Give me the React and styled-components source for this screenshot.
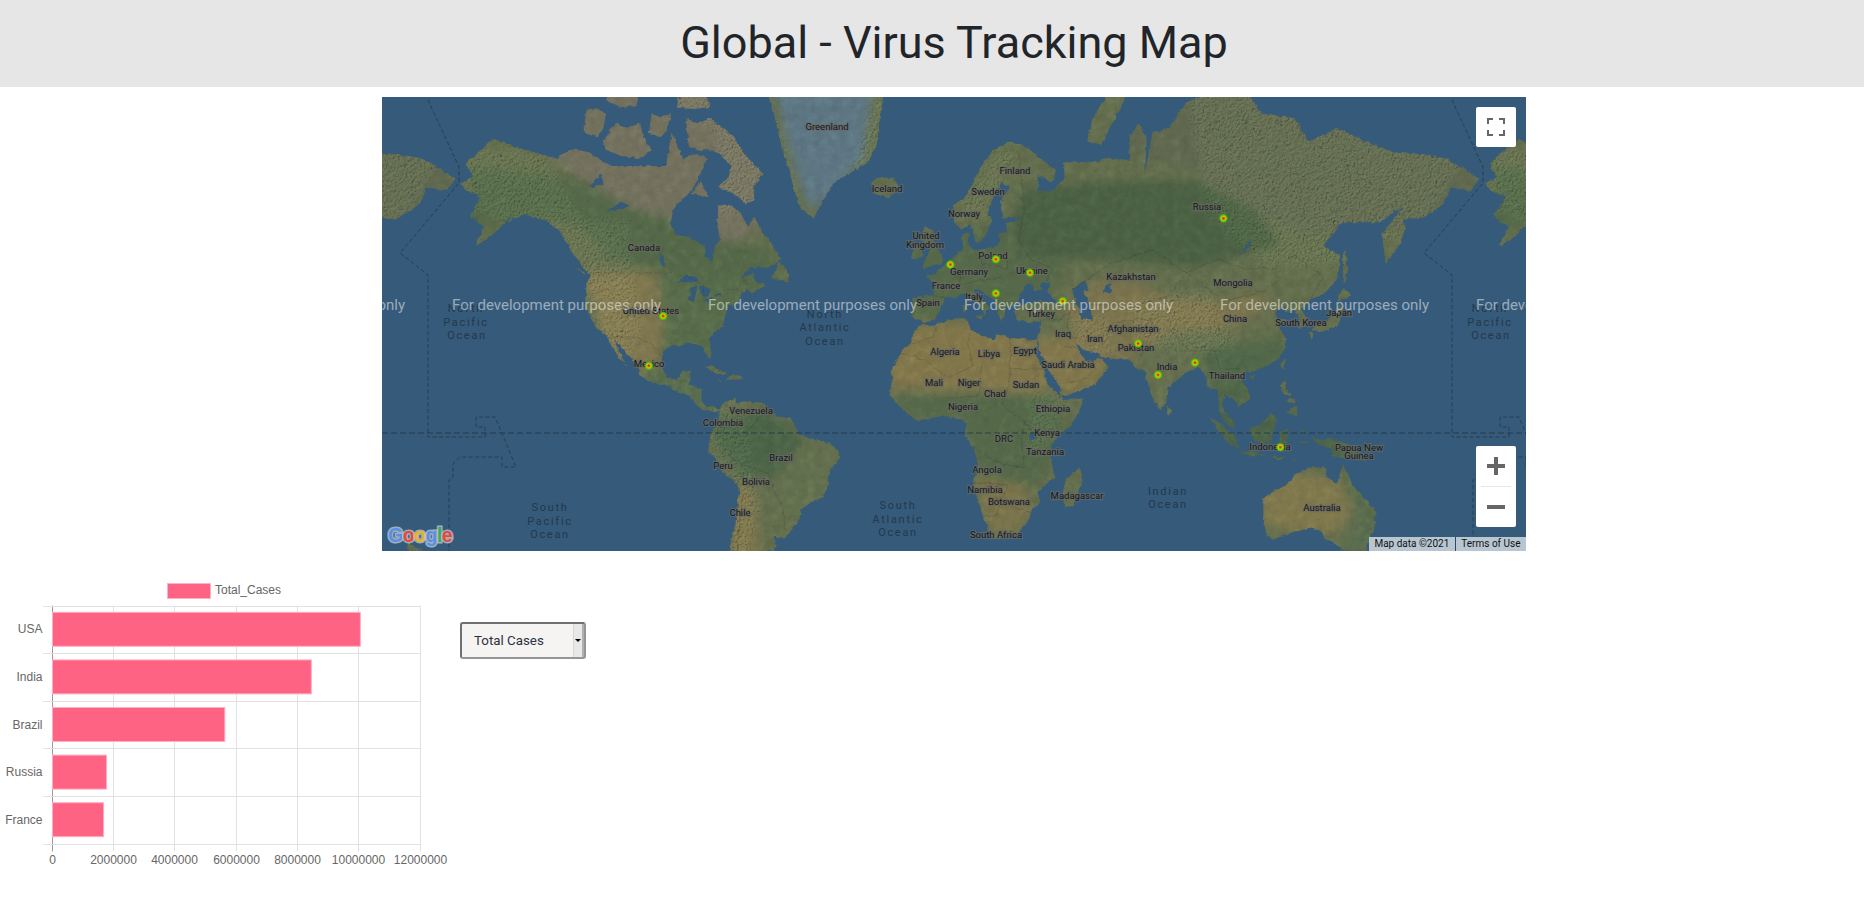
import React from 'react';
import styled, { createGlobalStyle } from 'styled-components';

const GlobalStyle = createGlobalStyle`
  html, body {
    margin: 0;
    padding: 0;
    background: #fff;
    font-family: Roboto, "Liberation Sans", sans-serif;
  }
`;

// web mercator at google zoom 2, in pixels inside the 1144x454 map frame
const WORLD = 1024;
const lonX = (lon) => 557 + (lon * WORLD) / 360;
const latY = (lat) => 336 - (WORLD / (2 * Math.PI)) * Math.log(Math.tan(Math.PI / 4 + (lat * Math.PI) / 360));
const toPath = (pts, close = true) =>
  pts.map(([lon, lat], i) => `${i ? 'L' : 'M'}${lonX(lon).toFixed(1)} ${latY(lat).toFixed(1)}`).join('') + (close ? 'Z' : '');

const LAND = [
  // north america
  [[-168,65.6],[-164,66.5],[-166.5,68.3],[-163,69.5],[-156.5,71.3],[-150,70.5],[-141,69.6],[-135,69],[-128,70.2],[-124,69.8],[-115,68],[-108,68],[-102,68],[-96,68],[-94,72],[-90,69],[-85,69.5],[-81.5,69],[-85,66],[-87,64.5],[-93,62],[-94.5,59],[-92.5,57],[-88,56.5],[-82.5,55],[-82,52.5],[-79.5,51.3],[-79,54.5],[-77,56],[-78,59],[-77.5,62.4],[-73,62.2],[-70,61],[-67,58.5],[-65,60.3],[-62,57.5],[-58,54.5],[-55.7,52],[-60,50.2],[-66.5,50.2],[-70,47.5],[-65,49],[-64.5,47],[-61,46],[-66,44],[-67,45],[-70,43.5],[-70,41.7],[-74,40.5],[-75.5,37.5],[-76,35],[-78,34],[-81,31.5],[-80,27],[-80.5,25.2],[-82,27],[-83,29],[-85,29.7],[-89,30.2],[-90,29.2],[-94,29.5],[-97.3,27.5],[-97.5,22.5],[-95.5,18.7],[-92,18.6],[-90.5,21],[-87,21.4],[-88,17],[-83.5,15.2],[-83.5,11],[-81.5,9],[-79.5,9.5],[-77.3,8.6],[-78,7.3],[-80,7.5],[-83,8.3],[-85.5,10],[-87.5,13],[-91.5,14],[-94.5,16.2],[-100,17],[-105.5,20],[-105.5,22.5],[-109,26],[-112.5,29.5],[-114.7,31.5],[-112,27],[-110,23],[-109.5,23],[-112,25],[-115,29],[-117,32.5],[-120.5,34.5],[-122.5,37.5],[-124.3,40.3],[-124,46],[-122.5,48.3],[-125,50],[-128,52.5],[-130.5,55],[-134,58],[-138,59.5],[-146,60.7],[-151.5,59.3],[-150,61],[-153,59],[-158,56.5],[-163,54.8],[-160,58.5],[-165,60.5],[-161,63.5],[-166,64.5]],
  // arctic islands
  [[-80,73.5],[-76,72.5],[-72,71.5],[-70,70.3],[-67,69],[-62,67],[-65,65],[-65,63],[-68,62.5],[-70,63.3],[-74,64.5],[-78,65],[-74,66.5],[-73,68],[-77,69.5],[-80,70],[-85,70],[-88,70.5],[-89,73.5],[-85,73]],
  [[-117,70],[-112,69.3],[-105,69],[-101,70],[-104,71.5],[-105,73],[-110,72.5],[-114,73],[-118,71]],
  [[-125,72],[-120,71.5],[-118,72.5],[-117,74],[-121,74.5],[-124,74.3]],
  [[-90,76.5],[-84,76.2],[-78,76.5],[-75,78.5],[-64,81.5],[-62,82.5],[-75,83],[-90,82],[-85,79]],
  [[-92,74.5],[-86,74.4],[-80,74.6],[-82,75.5],[-80,75.9],[-87,75.5],[-92,76.5]],
  [[-117,75.2],[-112,74.6],[-106,74.7],[-106,76],[-110,75.6],[-116,76.5]],
  [[-102,72],[-98,71.5],[-96,72],[-94,74],[-98,73.6],[-101,74]],
  [[-87,64],[-81,63.5],[-84,66]],
  [[-59,47.7],[-53,46.7],[-53,49],[-56,51.5]],
  [[-128,50.5],[-123.5,48.4],[-125,48.8]],
  [[-85,22],[-80,23],[-74.2,20.2],[-78,19.9],[-82,22.5]],
  [[-74.5,18.5],[-68.5,18.5],[-70,19.8],[-73,20]],
  [[-78.3,18.3],[-76.3,18],[-77,18.5]],
  // greenland
  [[-73,78.2],[-60,76],[-55,70],[-51,65],[-49,62],[-44,60],[-42,62],[-37,65.7],[-25,68.5],[-22,70.5],[-20,75],[-18,78],[-12,81.5],[-30,83.5],[-50,82.5],[-62,81.5]],
  // south america
  [[-77.3,8.6],[-75,11],[-72,12],[-71.5,10.5],[-68,11],[-62,10.6],[-60,8.5],[-57,6],[-52,5],[-50,1],[-48,-1],[-44,-2.5],[-40,-3],[-35.5,-5.5],[-35,-9],[-38.5,-13],[-39,-18],[-41,-22],[-45,-23.7],[-48.5,-26],[-49,-29],[-52,-32.5],[-54,-34.5],[-57,-34.5],[-58.5,-34],[-57,-36.5],[-58,-38.3],[-62,-39],[-62,-42],[-73.5,-42],[-73.5,-37],[-71.5,-30],[-70.3,-20],[-71,-17.5],[-76,-14],[-78,-10],[-81,-6],[-81,-4],[-80,-2.5],[-81,-1],[-79.5,1],[-77.5,4],[-77.5,7.3]],
  // africa
  [[-6,35.8],[-2,35.2],[3,36.8],[10,37.3],[11,34],[15,32.3],[20,31],[20,32.8],[25,31.7],[32,31.2],[33,31],[34.4,31.3],[34.5,29],[33,28.5],[32.5,30],[33.5,27.5],[34,26.5],[37,21.5],[37.5,18.5],[39.5,15.5],[43.2,12.5],[43.3,11.5],[51,12],[49,7],[46,2.5],[41,-2],[39,-6],[39.5,-10],[40.7,-15],[35,-20],[35.3,-24],[32.8,-26],[31,-30],[27,-33.8],[20,-34.8],[18.3,-34],[15,-27],[12,-18],[13.7,-11],[12,-5],[9,-1],[9.8,3.5],[8.5,4.5],[5,5.5],[1,6],[-4,5],[-8,4.5],[-13,8.5],[-16.7,12.5],[-17.5,14.7],[-16,19],[-17,21],[-13,27.7],[-10,30],[-9,33]],
  [[49.5,-12],[50.5,-16],[47,-25],[44,-25],[43.5,-21],[44.5,-16]],
  // eurasia
  [[-9,37],[-9.5,38.7],[-9,43],[-2,43.5],[-1.2,46],[-4.7,48.3],[-1.5,48.7],[1.5,50.5],[4,52],[7,53.5],[8.5,54],[8.2,57],[10.5,57.6],[10,55],[12,54],[14,54],[19,54.5],[21,55.3],[21.5,57.5],[24,57.2],[23.5,59.2],[30,60],[25,60.2],[22.5,60],[21.5,62.8],[25,65],[22,65.8],[17.5,62],[17.5,60.5],[19,59.8],[16.5,57],[14.3,55.5],[13,55.4],[11,59],[8,58],[5.5,59],[5,62],[10,64],[14,67.5],[19,70],[25,71],[31,70.3],[41,67.3],[40,65.8],[35,66.8],[34.8,64.5],[40,64.6],[44,66.3],[44,68.5],[54,68.5],[60,69],[67,68.8],[67,71.5],[70,73],[73,71.5],[72.5,67],[75,72],[81,72.5],[87,75],[100,76.5],[105,77.5],[113,74],[125,73.5],[130,71],[140,72.5],[150,71],[160,69.7],[170,69.5],[178,69],[185,67.5],[190,66.2],[187,64.5],[180,65],[177.5,62.5],[170,60],[163,60],[164,58.5],[162,55],[157,51],[155.7,57],[163,62],[155,59.3],[142,59.3],[135,54.7],[141,53],[140.5,48],[135,43.5],[130.5,42.5],[127.5,39.7],[129.4,37],[129,35.2],[126.3,34.5],[126.7,37.5],[125,39.7],[121.5,39],[122,40.7],[118,39],[119,37.3],[122.5,37],[119.5,35],[121.8,31.5],[122,29],[119.5,25.5],[114,22.3],[110,21],[108,21.5],[106,19],[109,14],[109,11.5],[105,8.7],[105,10.3],[102.5,12.2],[100.5,13.5],[99.5,10],[100.5,7],[103.5,4.5],[104,1.3],[101,3],[98.5,8],[98,15],[94.5,16],[94,19],[91.5,22.5],[89,21.8],[86.8,20.8],[80.3,15.5],[80,11],[77.5,8],[75,12.5],[72.8,19],[72.5,21],[69,22.3],[67,25],[61.5,25.2],[57,25.8],[56.5,27],[51,28],[48,30],[50,26.5],[51.5,24.5],[54.5,24.2],[56.3,26],[59.7,22.5],[55,17],[45,13],[43,13],[42.5,16],[39,21],[35,28],[34.5,31.5],[35.8,35],[36,36.8],[32,36],[30,36.3],[27.3,37],[26.5,39.5],[29,41],[35,42],[41.5,41.5],[38,44.4],[39,47],[35,46],[36.5,45.2],[33.5,44.5],[33,46],[30.8,46.4],[28.7,44],[28,41.7],[26,40.8],[23.5,40.3],[23,38],[22,36.5],[20,39.8],[19.3,42],[14,45.2],[12.3,45.2],[12.5,44],[16,41.7],[18.5,40],[16.5,39.5],[16,38],[14,41],[10.5,43],[8.8,44.4],[6,43],[3,43],[0.5,40.5],[-0.3,38.7],[-2,36.8],[-5.5,36],[-6.5,37]],
  // islands of the old world
  [[-5.5,50],[1.3,51.2],[1.5,52.8],[-1.5,55],[-2,57.7],[-5,58.6],[-6,56],[-3,54],[-5,52]],
  [[-10,52],[-6,52.2],[-6,55],[-8.5,55]],
  [[-24,65.5],[-22,64],[-18,63.4],[-14,65],[-16,66.4],[-22,66.4]],
  [[52,71],[57,70.7],[68,76.5],[60,76],[54,73.5]],
  [[12.5,38],[15.5,38.2],[15,36.8]],
  [[8.3,41],[9.7,41],[9.5,39.2],[8.5,39]],
  [[130.9,34],[135,33.6],[140,35],[142,39.5],[141,41.4],[139.8,39],[136.8,37],[132,35]],
  [[130,33.5],[131.8,33],[131,31]],
  [[140,42],[145,43.3],[142,45.4]],
  [[142,46],[143.5,49],[143,54],[142,53]],
  [[120,23],[121,22],[122,25],[121,25.2]],
  [[108.7,19.3],[110.5,18.3],[111,20],[109.5,20]],
  [[120,16.5],[122,18.5],[122,15],[124,13],[121,13.7]],
  [[122,7],[126,6],[126,9.5],[123.5,8.5]],
  [[122,11],[125,10.5],[125,12.3],[123,12]],
  [[80,9.7],[82,7.5],[80.5,6]],
  [[95.3,5.5],[98,4],[104,-1],[106,-5.8],[102,-4],[98,1]],
  [[105.2,-6.5],[111,-6.5],[114.5,-8],[108,-7.8]],
  [[115,-8.3],[120,-8.3],[123,-8.5],[119,-9.2]],
  [[123.5,-10],[127,-8.5],[125,-9.7]],
  [[109,1.5],[113,3],[117,7],[119,5],[117.7,1],[116,-4],[111,-3],[109.5,0]],
  [[119.5,-5.5],[120,0.5],[125,1.5],[121,0.2],[123,-1],[122,-5],[120.5,-3]],
  [[127.5,2],[128.5,1],[128,-1],[127.5,0]],
  [[126,-3],[130.5,-3],[128,-3.8]],
  [[131,-1],[135,-3],[138,-1.7],[145,-4.5],[148,-8],[150.5,-10.5],[145,-8],[143,-9],[138,-8],[138,-5.5],[133,-4]],
  [[148.5,-5.5],[152,-4.2],[151,-6.2]],
  [[114,-22],[122,-18],[126,-14],[130,-12],[136,-12],[136,-15],[140,-17.5],[142,-11],[146,-19],[150,-22.5],[153.5,-27],[153,-32],[150.5,-36],[150,-38.5],[146,-39],[143,-38.7],[138,-35.5],[136,-35],[134,-32.5],[131,-31.5],[124,-33],[118,-35],[115,-34.2],[114,-27]],
  [[172.7,-34.5],[175,-37],[178.5,-38],[177,-39.5],[174,-39.5]],
];

const WATER = [
  [[47,45],[51,47],[53,45],[51,44.5],[53,41],[54,37],[50,37.3],[49,40],[47.5,43]],
  [[58,44],[61,44.5],[60,46.5],[58.5,46]],
  [[-92,46.8],[-85,46.7],[-85,48],[-89,48.5]],
  [[-88,42],[-86,42],[-85,46],[-87,45.5]],
  [[-84,46],[-80,45],[-82,43],[-84,44]],
  [[-83,41.6],[-79,42.7],[-81,42.8]],
  [[-79.5,43.3],[-76,43.5],[-77,44]],
  [[-123,65],[-118,65.5],[-119,67]],
  [[-117,61],[-109,62],[-112,62.8]],
  [[-98,50.5],[-96,50.5],[-98,54]],
  [[104,51.5],[110,55.5],[109,55.8],[105,52]],
  [[32,-2.5],[34,-2],[34,0.3],[32,0]],
];

const REGIONS = [
  ['#77735f', [[-130,78],[-60,78],[-60,60],[-70,56],[-78,56],[-85,58],[-95,60],[-110,62],[-125,66],[-140,70]]],
  ['#566b48', [[-165,68],[-125,66],[-110,62],[-95,60],[-85,57],[-75,55],[-60,55],[-55,46],[-75,44],[-90,47],[-100,50],[-115,52],[-125,58],[-135,60],[-165,58]]],
  ['#85794f', [[-125,49],[-100,49],[-97,35],[-98,27],[-100,20],[-108,22],[-118,32]]],
  ['#5a6e4c', [[-97,49],[-65,47],[-75,35],[-80,25],[-97,28]]],
  ['#5c7050', [[-105,22],[-95,22],[-85,22],[-78,8],[-85,8],[-100,15]]],
  ['#607989', [[-60,78],[-22,78],[-27,69],[-42,62],[-46,62],[-51,68]]],
  ['#88794b', [[-18,30],[-5,36],[10,36],[32,32],[40,20],[36,14],[15,15],[-5,15],[-17,16]]],
  ['#88794b', [[34,32],[48,32],[60,25],[55,16],[44,13],[37,22]]],
  ['#7f754d', [[44,40],[55,47],[70,47],[80,43],[100,42],[110,44],[118,42],[105,35],[80,33],[70,25],[57,25],[48,30]]],
  ['#566b4a', [[-16,13],[40,13],[45,2],[40,-10],[35,-18],[15,-15],[10,-2],[8,5],[-10,6]]],
  ['#80764c', [[12,-15],[30,-18],[33,-27],[27,-33],[18,-33]]],
  ['#4e6547', [[-80,5],[-60,8],[-50,0],[-45,-5],[-55,-15],[-70,-15],[-78,-5]]],
  ['#667250', [[-50,-5],[-35,-5],[-40,-22],[-50,-30],[-60,-25],[-55,-12]]],
  ['#7f744c', [[-72,-17],[-65,-20],[-62,-42],[-74,-42]]],
  ['#586b49', [[-10,55],[30,60],[45,52],[40,44],[20,38],[-10,37]]],
  ['#4d6242', [[30,65],[60,66],[90,66],[110,62],[120,55],[90,50],[60,52],[30,52],[25,60]]],
  ['#646a50', [[85,78],[190,72],[190,60],[140,55],[115,60],[85,68],[60,70]]],
  ['#687150', [[68,30],[88,27],[88,20],[78,8],[72,20]]],
  ['#53694a', [[92,28],[122,32],[120,22],[108,10],[100,5],[95,15]]],
  ['#4f6648', [[95,7],[130,8],[152,-3],[150,-12],[115,-10],[100,-8]]],
  ['#867a4e', [[113,-20],[125,-14],[140,-16],[145,-25],[140,-33],[125,-33],[114,-30]]],
  ['#5a6e4e', [[142,-11],[155,-28],[150,-39],[142,-38],[148,-28]]],
];

const RELIEF = [
  [[-170,70],[-140,70],[-125,60],[-128,50],[-150,58],[-165,62]],
  [[-130,60],[-110,60],[-105,35],[-110,22],[-118,30],[-125,45]],
  [[-125,78],[-60,78],[-62,62],[-78,60],[-78,72]],
  [[-72,78],[-55,72],[-48,60],[-52,60],[-62,76]],
  [[-42,60],[-20,70],[-15,78],[-22,76],[-30,68]],
  [[-80,10],[-68,10],[-63,-25],[-68,-42],[-75,-42],[-72,-18],[-82,-3]],
  [[65,42],[95,45],[105,30],[95,26],[70,30]],
  [[85,78],[190,72],[170,58],[135,50],[115,50],[95,60]],
  [[5,60],[20,70],[28,70],[15,60]],
  [[45,38],[60,38],[62,26],[50,28]],
  [[33,15],[45,12],[38,-5],[30,-10]],
];

const BORDERS = [
  [[-141,69.6],[-141,60.3],[-135,59]],
  [[-123,49],[-95,49],[-89,48],[-83,46],[-82.5,42.5],[-79,43],[-75,45],[-71,45],[-68,47.3],[-67,45]],
  [[-117,32.5],[-108,31.5],[-106,31.7],[-101,29.7],[-97.3,26]],
  [[-92,14.5],[-91,17.8],[-89,17.9]],
  [[-60,8.5],[-67,1],[-70,-4],[-74,-8],[-69,-11],[-60,-14],[-58,-20],[-55,-25],[-54,-33]],
  [[-71,-17.5],[-69,-22],[-70,-30],[-71,-40]],
  [[-9,30],[-2,32],[-1,35]],
  [[-13,27],[-5,25],[3,19],[12,23],[10,30],[11,33]],
  [[25,31.7],[25,20],[24,15],[22,10],[30,4],[34,-1]],
  [[25,22],[37,22]],
  [[3,12],[14,13],[15,23]],
  [[12,-5],[22,-11],[30,-12],[29,-2],[30,4]],
  [[12,-17],[24,-18],[20,-28],[16,-28]],
  [[33,-27],[25,-25],[20,-22]],
  [[28,70],[30,62],[28,56],[32,52],[40,50],[38,47]],
  [[47,45],[60,51],[75,54],[87,49],[80,43],[70,41],[55,41],[53,41]],
  [[87,49],[98,52],[107,50],[118,50],[125,53],[135,48],[131,43]],
  [[87,49],[100,42],[112,44],[119,47]],
  [[80,35],[88,28],[97,28],[99,22],[106,22]],
  [[61,36],[70,37],[75,37],[74,32],[70,24]],
  [[46,39],[45,35],[48,30]],
  [[36,37],[42,37],[46,39]],
  [[44,29],[48,29],[55,22],[52,19],[45,17]],
  [[14,54],[15,51],[24,50],[24,54]],
  [[2,51],[8,49],[7,46],[13,47],[22,48]],
  [[-2,43.5],[3,42.5]],
];

const TIMEZONE = [
  [[46,3],[77,70],[77,86],[18,156],[46,178],[46,340],[103,340],[103,330],[94,330],[94,320],[113,320],[134,370],[120,370],[120,360],[78,360],[71,367],[71,380],[67,383],[67,454]],
];

const LABELS = [
  ['Greenland',827,126],['Iceland',887,188],['Canada',644,247],['United States',651,310],['United',926,235],['Kingdom',925,244],['Spain',928,302],
  ['Finland',1015,170],['Sweden',988,191],['Norway',964,213],['Russia',1207,206],['Poland',993,255],['Germany',969,271],['France',946,285],['Ukraine',1032,270],['Italy',974,296],
  ['Kazakhstan',1131,276],['Mongolia',1233,282],['Turkey',1041,313],['China',1235,318],['South Korea',1301,322],['Japan',1339,312],['Afghanistan',1133,328],
  ['Mexico',649,363],['Venezuela',751,410],['Colombia',723,422],['Brazil',781,457],['Peru',723,465],['Bolivia',756,481],['Chile',740,512],
  ['Algeria',945,351],['Mali',934,382],['Libya',989,353],['Egypt',1025,350],['Niger',969,382],['Chad',995,393],['Nigeria',963,406],
  ['Iraq',1063,333],['Iran',1095,338],['Pakistan',1136,347],['India',1167,366],['Saudi Arabia',1068,364],['Thailand',1227,375],['Sudan',1026,384],['Ethiopia',1053,408],['Kenya',1047,432],['DRC',1004,438],['Tanzania',1045,451],['Indonesia',1270,446],['Papua New',1359,447],['Guinea',1359,455],['Angola',987,469],['Namibia',985,489],['Botswana',1009,501],['Madagascar',1077,495],['South Africa',996,534],['Australia',1322,507],
];

const OCEANS = [
  ['North',466,308],['Pacific',466,322],['Ocean',467,335],
  ['North',825,314],['Atlantic',825,327],['Ocean',825,341],
  ['South',550,507],['Pacific',550,521],['Ocean',550,534],
  ['South',898,505],['Atlantic',898,519],['Ocean',898,532],
  ['Indian',1168,491],['Ocean',1168,504],
  ['North',1490,308],['Pacific',1490,322],['Ocean',1491,335],
];

const HEAT_POINTS = [[38,-97],[23,-102],[50.83,4],[52,20],[44,20],[49,32],[42,43.5],[60,100],[30,70],[20,77],[24,90],[-5,120]];
const WATERMARK_X = [-186,70,326,582,838,1094];

const Page = styled.div`
  min-height: 900px;
  background: #fff;
`;

const Banner = styled.header`
  box-sizing: border-box;
  height: 87px;
  padding: 0 0 2px 44px;
  background: #e6e6e6;
  display: flex;
  align-items: center;
  justify-content: center;
`;

const Title = styled.h1`
  margin: 0;
  font-family: Roboto, sans-serif;
  font-size: 45px;
  font-weight: 400;
  color: #212529;
`;

const MapRow = styled.section`
  display: flex;
  justify-content: center;
  padding: 10px 0 0 44px;
`;

const MapFrame = styled.div`
  position: relative;
  width: 1144px;
  height: 454px;
  overflow: hidden;
  background: #355a7a;
`;

const MapCanvas = styled.svg`
  display: block;
  width: 1144px;
  height: 454px;
`;

const ReliefLayer = styled.g`
  mix-blend-mode: overlay;
`;

const BorderLine = styled.path`
  fill: none;
  stroke: #20262a;
  stroke-width: 0.6;
  stroke-opacity: 0.32;
  stroke-dasharray: ${(p) => (p.$dashed ? '3 2' : 'none')};
`;

const ZoneLine = styled.path`
  fill: none;
  stroke: #1f3040;
  stroke-width: ${(p) => p.$w};
  stroke-opacity: 0.75;
  stroke-dasharray: ${(p) => p.$dash};
`;

const CountryLabel = styled.text`
  font-family: Roboto, sans-serif;
  font-size: 9.5px;
  fill: #15181b;
  stroke: #6a6a66;
  stroke-opacity: 0.65;
  stroke-width: 2.4px;
  paint-order: stroke;
  text-anchor: middle;
  dominant-baseline: central;
`;

const OceanLabel = styled.text`
  font-family: Roboto, sans-serif;
  font-size: 11px;
  letter-spacing: 1.7px;
  fill: #24384c;
  text-anchor: middle;
  dominant-baseline: central;
`;

const Watermark = styled.text`
  font-family: Roboto, sans-serif;
  font-size: 15px;
  fill: #fff;
  fill-opacity: 0.5;
  dominant-baseline: central;
`;

const LogoText = styled.text`
  font-family: "Liberation Sans", sans-serif;
  font-size: 19.5px;
  font-weight: 700;
  letter-spacing: -0.5px;
  stroke: #c3ccd4;
  stroke-opacity: 0.75;
  stroke-width: 3px;
  paint-order: stroke;
`;

const ControlCard = styled.div`
  position: absolute;
  right: 10px;
  width: 40px;
  background: #fff;
  border-radius: 2px;
  display: flex;
  flex-direction: column;
  align-items: center;
  ${(p) => (p.$top ? 'top: 10px;' : 'bottom: 24px;')}
`;

const ControlButton = styled.div`
  width: 40px;
  height: 40px;
  display: flex;
  align-items: center;
  justify-content: center;
`;

const ControlDivider = styled.div`
  width: 30px;
  height: 1px;
  background: #e6e6e6;
`;

const Attribution = styled.div`
  position: absolute;
  right: 0;
  bottom: 0;
  height: 14px;
  display: flex;
  align-items: center;
  background: #b8c6d1;
  font-family: Roboto, sans-serif;
  font-size: 10px;
  color: #111;
`;

const AttributionItem = styled.span`
  padding: 0 5.5px;
  line-height: 14px;
  & + & {
    border-left: 1px solid #2b4a66;
  }
`;

const BottomRow = styled.section`
  display: flex;
  align-items: flex-start;
  margin-top: 19px;
`;

const ChartCanvas = styled.svg`
  display: block;
  flex: none;
  width: 450px;
  height: 300px;
`;

const ChartText = styled.text`
  font-family: "Liberation Sans", Arial, sans-serif;
  font-size: 12px;
  fill: #666;
  text-anchor: ${(p) => p.$anchor || 'middle'};
  dominant-baseline: central;
`;

const GridLine = styled.line`
  stroke: ${(p) => (p.$axis ? '#9a9a9a' : '#e2e2e2')};
  stroke-width: 1;
`;

const Bar = styled.rect`
  fill: #ff6384;
  stroke: #ffb1c1;
  stroke-width: 1;
`;

const SelectBox = styled.div`
  box-sizing: border-box;
  width: 126px;
  height: 37px;
  margin: 52px 0 0 10px;
  display: flex;
  align-items: stretch;
  border: 2px solid;
  border-color: #707070 #959595 #959595 #707070;
  border-radius: 3px;
  background: #f5f4f2;
`;

const SelectValue = styled.div`
  flex: 1;
  display: flex;
  align-items: center;
  padding-left: 12px;
  font-family: Roboto, sans-serif;
  font-size: 13.33px;
  color: #2a3240;
`;

const SelectArrow = styled.div`
  width: 8px;
  display: flex;
  align-items: center;
  justify-content: center;
  background: #e8e8e6;
  border-left: 1px solid #d8d8d8;
  border-right: 2px solid #b0b0b0;
  &::after {
    content: '';
    border-left: 3px solid transparent;
    border-right: 3px solid transparent;
    border-top: 3px solid #000;
  }
`;

const World = () => (
  <g id="world" clipPath="url(#landClip)">
    <rect x="-50" y="0" width="1300" height="454" fill="#67704e" />
    <g filter="url(#soften)">
      {REGIONS.map(([color, pts], i) => (
        <path key={i} d={toPath(pts)} fill={color} />
      ))}
    </g>
    <ReliefLayer>
      <rect x="-50" y="0" width="1300" height="454" filter="url(#mottle)" opacity="0.3" />
      {RELIEF.map((pts, i) => (
        <path key={i} d={toPath(pts)} filter="url(#relief)" opacity="0.8" />
      ))}
    </ReliefLayer>
    <rect x="-50" y="0" width="1300" height="454" fill="#2c3634" opacity="0.14" />
    {WATER.map((pts, i) => (
      <path key={i} d={toPath(pts)} fill="#355a7a" />
    ))}
    {BORDERS.map((pts, i) => (
      <BorderLine key={i} d={toPath(pts, false)} $dashed={i < 2} />
    ))}
  </g>
);

const MapDefs = () => (
  <defs>
    <clipPath id="landClip">
      <path d={LAND.map((pts) => toPath(pts)).join('')} />
    </clipPath>
    <filter id="coast" x="0" y="0" width="100%" height="100%" filterUnits="userSpaceOnUse" primitiveUnits="userSpaceOnUse">
      <feTurbulence type="fractalNoise" baseFrequency="0.2" numOctaves="3" seed="7" result="n" />
      <feDisplacementMap in="SourceGraphic" in2="n" scale="4" xChannelSelector="R" yChannelSelector="G" />
    </filter>
    <filter id="soften" x="-5%" y="-5%" width="110%" height="110%">
      <feGaussianBlur stdDeviation="5" />
    </filter>
    <filter id="mottle" x="0" y="0" width="100%" height="100%">
      <feTurbulence type="fractalNoise" baseFrequency="0.12" numOctaves="3" seed="3" />
      <feColorMatrix type="saturate" values="0" />
    </filter>
    <filter id="relief" x="-5%" y="-5%" width="110%" height="110%">
      <feTurbulence type="fractalNoise" baseFrequency="0.55" numOctaves="2" seed="11" result="n" />
      <feDiffuseLighting in="n" surfaceScale="1.8" lightingColor="#a8a8a8" result="lit">
        <feDistantLight azimuth="225" elevation="50" />
      </feDiffuseLighting>
      <feGaussianBlur in="SourceAlpha" stdDeviation="5" result="edge" />
      <feComposite in="lit" in2="edge" operator="in" />
    </filter>
    <radialGradient id="heat">
      <stop offset="0" stopColor="#f01800" />
      <stop offset="0.22" stopColor="#e04a00" />
      <stop offset="0.42" stopColor="#c8c800" />
      <stop offset="0.65" stopColor="#6cd400" />
      <stop offset="1" stopColor="#58b800" stopOpacity="0.35" />
    </radialGradient>
  </defs>
);

const MapView = () => (
  <MapFrame>
    <MapCanvas viewBox="0 0 1144 454">
      <MapDefs />
      <g filter="url(#coast)">
        <World />
        <use href="#world" x={-WORLD} />
        <use href="#world" x={WORLD} />
      </g>
      <ZoneLine d="M0 336H1144" $w="1.1" $dash="6 3" />
      {[0, WORLD].map((dx) => (
        <g key={dx} transform={`translate(${dx} 0)`}>
          {TIMEZONE.map((pts, i) => (
            <ZoneLine key={i} d={'M' + pts.map((p) => p.join(' ')).join('L')} $w="0.9" $dash="4 2.5" />
          ))}
        </g>
      ))}
      {OCEANS.map(([name, x, y], i) => (
        <OceanLabel key={i} x={x - 382} y={y - 97}>{name}</OceanLabel>
      ))}
      {LABELS.map(([name, x, y]) => (
        <CountryLabel key={name} x={x - 382} y={y - 97}>{name}</CountryLabel>
      ))}
      {HEAT_POINTS.map(([lat, lon]) => (
        <circle key={`${lat}${lon}`} cx={lonX(lon)} cy={latY(lat)} r="4.5" fill="url(#heat)" />
      ))}
      {WATERMARK_X.map((x) => (
        <Watermark key={x} x={x} y="208">For development purposes only</Watermark>
      ))}
      <LogoText x="6" y="445">
        <tspan fill="#5b8fe6">G</tspan>
        <tspan fill="#e8483c">o</tspan>
        <tspan fill="#eab422">o</tspan>
        <tspan fill="#5b8fe6">g</tspan>
        <tspan fill="#3fa85a">l</tspan>
        <tspan fill="#e8483c">e</tspan>
      </LogoText>
    </MapCanvas>
    <ControlCard $top>
      <ControlButton>
        <svg width="18" height="18" viewBox="0 0 18 18" fill="none" stroke="#666" strokeWidth="2">
          <path d="M1 6V1h5M12 1h5v5M17 12v5h-5M6 17H1v-5" />
        </svg>
      </ControlButton>
    </ControlCard>
    <ControlCard>
      <ControlButton>
        <svg width="18" height="18" viewBox="0 0 18 18" fill="#666">
          <path d="M18 7h-7V0H7v7H0v4h7v7h4v-7h7z" />
        </svg>
      </ControlButton>
      <ControlDivider />
      <ControlButton>
        <svg width="18" height="18" viewBox="0 0 18 18" fill="#666">
          <path d="M0 7h18v4H0z" />
        </svg>
      </ControlButton>
    </ControlCard>
    <Attribution>
      <AttributionItem>Map data ©2021</AttributionItem>
      <AttributionItem>Terms of Use</AttributionItem>
    </Attribution>
  </MapFrame>
);

const CASES = [
  ['USA', 10039000],
  ['India', 8440000],
  ['Brazil', 5620000],
  ['Russia', 1760000],
  ['France', 1665000],
];

const PLOT = { left: 52, right: 420, top: 35.5, bottom: 273.5, max: 12000000 };

const CasesChart = () => {
  const plotW = PLOT.right - PLOT.left;
  const rowH = (PLOT.bottom - PLOT.top) / CASES.length;
  const ticks = [0, 2000000, 4000000, 6000000, 8000000, 10000000, 12000000];
  return (
    <ChartCanvas viewBox="0 0 450 300">
      <Bar x="167.5" y="13.5" width="43" height="15" />
      <ChartText $anchor="start" x="215" y="20">Total_Cases</ChartText>
      {ticks.map((t, i) => {
        const x = Math.floor(PLOT.left + (t / PLOT.max) * plotW) + 0.5;
        return (
          <g key={t}>
            <GridLine $axis={i === 0} x1={x} x2={x} y1={PLOT.top} y2={PLOT.bottom + 8} />
            <ChartText x={x} y="290">{t}</ChartText>
          </g>
        );
      })}
      {CASES.map(([name, value], i) => {
        const y = PLOT.top + rowH * i;
        return (
          <g key={name}>
            <Bar x={PLOT.left + 0.5} y={y + (rowH - 34) / 2} width={(value / PLOT.max) * plotW} height="34" />
            <ChartText $anchor="end" x="42.5" y={y + rowH / 2}>{name}</ChartText>
          </g>
        );
      })}
      {[0, 1, 2, 3, 4, 5].map((i) => {
        const y = Math.round(PLOT.top + rowH * i) + 0.5;
        return <GridLine key={i} x1="43" x2={PLOT.right} y1={y} y2={y} />;
      })}
    </ChartCanvas>
  );
};

const App = () => (
  <>
    <GlobalStyle />
    <Page>
      <Banner>
        <Title>Global - Virus Tracking Map</Title>
      </Banner>
      <MapRow>
        <MapView />
      </MapRow>
      <BottomRow>
        <CasesChart />
        <SelectBox>
          <SelectValue>Total Cases</SelectValue>
          <SelectArrow />
        </SelectBox>
      </BottomRow>
    </Page>
  </>
);

export default App;
